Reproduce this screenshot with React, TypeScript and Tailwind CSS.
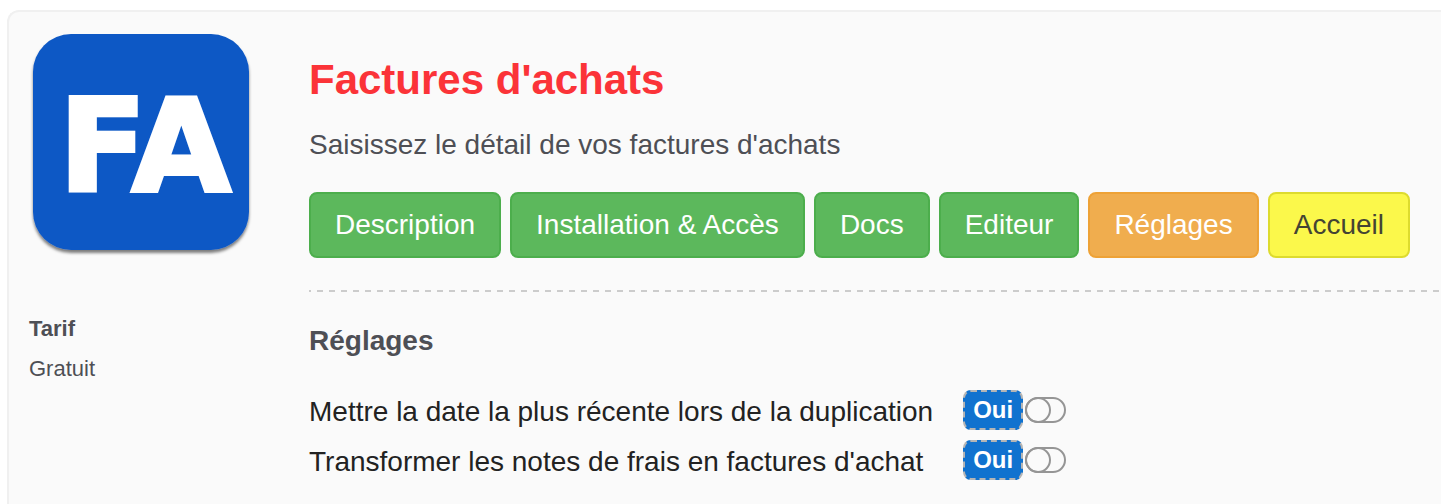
import { useState } from 'react';
import clsx from 'clsx';

const tabs = [
  { label: 'Description', tone: 'border-[#4cae4c] bg-[#5cb85c] text-white' },
  { label: 'Installation & Accès', tone: 'border-[#4cae4c] bg-[#5cb85c] text-white' },
  { label: 'Docs', tone: 'border-[#4cae4c] bg-[#5cb85c] text-white' },
  { label: 'Editeur', tone: 'border-[#4cae4c] bg-[#5cb85c] text-white' },
  { label: 'Réglages', tone: 'border-[#eea236] bg-[#f0ad4e] text-white' },
  { label: 'Accueil', tone: 'border-[#dddb2e] bg-[#fbf84b] text-[#444433]' },
];

const settings = [
  { id: 'date', label: 'Mettre la date la plus récente lors de la duplication' },
  { id: 'notes', label: "Transformer les notes de frais en factures d'achat" },
];

function Logo() {
  return (
    <svg viewBox="0 0 224 230" className="w-full" role="img" aria-label="FA">
      <defs>
        <filter id="shadow" x="-10%" y="-10%" width="120%" height="120%">
          <feDropShadow dx="0" dy="3" stdDeviation="1.5" floodColor="#000" floodOpacity="0.5" />
        </filter>
      </defs>
      <rect x="4" y="4" width="216" height="216" rx="38" fill="#1059c5" filter="url(#shadow)" />
      <text
        x="30"
        y="161"
        fontFamily="DejaVu Sans, sans-serif"
        fontWeight="700"
        fontSize="128"
        fill="#fff"
        stroke="#fff"
        strokeWidth="4"
      >
        FA
      </text>
    </svg>
  );
}

function Setting({ id, label }: { id: string; label: string }) {
  const [toggled, setToggled] = useState(false);

  return (
    <>
      <label htmlFor={id} className="pt-1 text-[28px] leading-[46px] text-[#222222]">
        {label}
      </label>
      <div className="flex items-center gap-0.5">
        <span className="rounded-lg border-2 border-dashed border-[#b5b5b5] bg-[#1072cf] px-2 text-2xl leading-9 font-bold text-white">
          {toggled ? 'Non' : 'Oui'}
        </span>
        <input
          id={id}
          type="checkbox"
          checked={toggled}
          onChange={() => setToggled(!toggled)}
          className="flex h-[26px] w-[41px] appearance-none rounded-full border-2 border-[#959595] before:-m-0.5 before:size-[26px] before:rounded-full before:border-2 before:border-[#959595] checked:justify-end"
        />
      </div>
    </>
  );
}

export default function App() {
  return (
    <div className="min-h-screen bg-white pt-2.5 pl-[7px] font-['Liberation_Sans',Arial,sans-serif] text-[#4e4f55]">
      <div className="flex min-h-[calc(100vh-10px)] gap-14 rounded-tl-xl border-t-2 border-l-2 border-[#f0f0f0] bg-[#fafafa] pt-[18px] pl-5">
        <aside className="w-56 shrink-0">
          <Logo />
          <h2 className="mt-[49px] text-[22px] leading-10 font-bold">Tarif</h2>
          <p className="text-[22px] leading-10">Gratuit</p>
        </aside>

        <main className="min-w-0 flex-1">
          <h1 className="mt-[25px] text-[42px] leading-[50px] font-bold text-[#fb3338]">Factures d'achats</h1>
          <p className="mt-5 text-[28px] leading-10">Saisissez le détail de vos factures d'achats</p>

          <nav className="mt-[27px] flex flex-wrap gap-[9px]">
            {tabs.map((tab) => (
              <button
                key={tab.label}
                type="button"
                className={clsx('rounded-lg border-2 px-6 text-[28px] leading-[62px]', tab.tone)}
              >
                {tab.label}
              </button>
            ))}
          </nav>

          <hr className="mt-8 h-0.5 border-0 bg-[linear-gradient(to_right,#cccccc_50%,transparent_50%)] bg-[length:12px_2px] bg-[position:-4px_0]" />

          <section className="pt-[29px]">
            <h2 className="text-[28px] leading-10 font-bold">Réglages</h2>
            <div className="mt-6 grid grid-cols-[auto_1fr] gap-x-[30px]">
              {settings.map((setting) => (
                <Setting key={setting.id} id={setting.id} label={setting.label} />
              ))}
            </div>
          </section>
        </main>
      </div>
    </div>
  );
}
